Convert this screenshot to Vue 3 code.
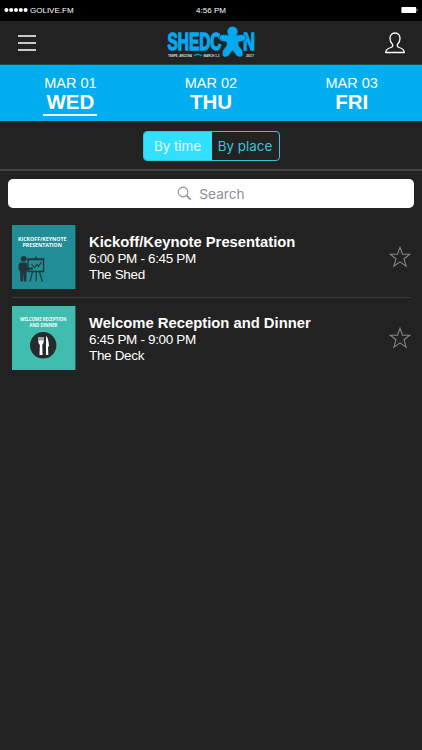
<script setup>

import {ref} from 'vue'


const days = ref([
    {date: 'MAR 01', name: 'WED'},
    {date: 'MAR 02', name: 'THU'},
    {date: 'MAR 03', name: 'FRI'},
])

const selectedDay = ref('WED')
const sortBy = ref('time')

const events = ref([
    {
        title: "Kickoff/Keynote Presentation",
        time: "6:00 PM - 6:45 PM",
        place: "The Shed",
        thumb: "keynote"
    },
    {
        title: "Welcome Reception and Dinner",
        time: "6:45 PM - 9:00 PM",
        place: "The Deck",
        thumb: "dinner"
    }
])

</script>

<template>

<div class="schedule">

    <div class="status-bar">
        <div class="carrier">
            <svg width="24" height="6" viewBox="0 0 24 6">
                <circle v-for="n in 5" :key="n" :cx="n * 4.8 - 2.4" cy="3" r="2.05" fill="#fff" />
            </svg>
            <span>GOLIVE.FM</span>
        </div>
        <span class="clock">4:56 PM</span>
        <svg class="battery" width="18" height="8" viewBox="0 0 18 8">
            <rect x="0.4" y="0.9" width="14.8" height="6.2" rx="0.8" fill="#fff" />
            <path d="M15.8 2.6 Q17.4 4 15.8 5.4 Z" fill="#fff" />
        </svg>
    </div>

    <div class="header">
        <svg class="menu-icon" width="18" height="18" viewBox="0 0 18 18">
            <path d="M0 2H18M0 9H18M0 16H18" stroke="#fff" stroke-width="1.7" />
        </svg>
        <svg class="logo" width="90" height="34" viewBox="0 0 90 34">
            <g class="logo-text" fill="#04a9f0" stroke="#04a9f0" stroke-width="1.4">
                <text x="0.5" y="23.8" textLength="54" lengthAdjust="spacingAndGlyphs">SHEDC</text>
                <text x="76" y="23.8" textLength="12" lengthAdjust="spacingAndGlyphs">N</text>
            </g>
            <g fill="#04a9f0" stroke="#232323" stroke-width="0.6">
                <path d="M61.5 9 H69.5 L74.8 8.6 Q79.3 8.8 79.2 12.2 Q78.8 15.4 74.5 15.5 L71.6 16.2 L72 20 Q77 24.5 76 29 Q74 32.5 70.5 30.5 Q68.5 29.6 67.5 27 L65.6 24.7 L63.7 27 Q62.7 29.6 60.7 30.5 Q57 32.5 55.2 29 Q54.3 24.5 59.2 20 L59.6 16.2 L56.7 15.5 Q52.4 15.4 52 12.2 Q52 8.8 56.3 8.6 Z" />
            </g>
            <circle cx="65.5" cy="5.7" r="5.2" fill="#04a9f0" />
            <g class="logo-small" fill="#ddd">
                <text x="1" y="30.5" textLength="24" lengthAdjust="spacingAndGlyphs">TEMPE, ARIZONA</text>
                <text x="36.5" y="30.5" textLength="16" lengthAdjust="spacingAndGlyphs">MARCH 1-3</text>
                <text x="79" y="30.5" textLength="8" lengthAdjust="spacingAndGlyphs">2017</text>
            </g>
            <path d="M27 29.8 Q30.8 26.9 34.7 29.8" fill="none" stroke="#04a9f0" stroke-width="1.2" />
        </svg>
        <svg class="user-icon" width="20" height="22" viewBox="0 0 20 22">
            <path d="M10 1 C6.7 1 4.9 3.3 5 6.6 C5 9 5.9 11 7.4 12.3 C8.2 13.8 7.6 14.9 5.8 15.5 C2.4 16.5 0.8 17.3 0.7 20.5 H19.3 C19.2 17.3 17.6 16.5 14.2 15.5 C12.4 14.9 11.8 13.8 12.6 12.3 C14.1 11 15 9 15 6.6 C15.1 3.3 13.3 1 10 1 Z" fill="none" stroke="#fff" stroke-width="1.3" stroke-linejoin="round" />
        </svg>
    </div>

    <div class="day-tabs">
        <div v-for="day in days" :key="day.name" class="day-tab" @click="selectedDay = day.name">
            <div class="day-label" :class="{ active: selectedDay === day.name }">
                <span class="day-date">{{ day.date }}</span>
                <span class="day-name">{{ day.name }}</span>
            </div>
        </div>
    </div>

    <div class="sort-bar">
        <div class="segmented">
            <button :class="{ active: sortBy === 'time' }" @click="sortBy = 'time'">By time</button>
            <button :class="{ active: sortBy === 'place' }" @click="sortBy = 'place'">By place</button>
        </div>
    </div>

    <div class="search-bar">
        <div class="search-box">
            <svg width="15" height="15" viewBox="0 0 15 15">
                <circle cx="6" cy="6" r="4.9" fill="none" stroke="#8e8e93" stroke-width="1.1" />
                <path d="M9.6 9.6L13.8 13.8" stroke="#8e8e93" stroke-width="1.5" />
            </svg>
            <span>Search</span>
        </div>
    </div>

    <div class="event-list">
        <div v-for="event in events" :key="event.title" class="event">
            <svg v-if="event.thumb === 'keynote'" class="thumb" width="64" height="64" viewBox="0 0 64 64">
                <rect width="63.4" height="64" fill="#218e96" />
                <g class="thumb-text">
                    <text x="6" y="15.6" textLength="48.5" lengthAdjust="spacingAndGlyphs">KICKOFF/KEYNOTE</text>
                    <text x="10.5" y="22" textLength="39.5" lengthAdjust="spacingAndGlyphs">PRESENTATION</text>
                </g>
                <g fill="none" stroke="#25343a">
                    <path d="M16 34.5H31.5V46.5H16ZM14.8 34H32.5M24 31.5V34" stroke-width="1.4" />
                    <path d="M20.5 47L18 56.5M24.2 47V56.5M27.5 47L30.5 56.5" stroke-width="1.2" />
                    <path d="M19.5 39L22.5 42.5L25 39.5L26.5 41.5L29.5 36.8" stroke-width="1.1" />
                    <path d="M12 41L16 43.7L21 43.5" stroke-width="2" />
                </g>
                <circle cx="11.7" cy="33.8" r="2.9" fill="#25343a" />
                <path d="M8.5 37.5H13.5Q15.3 38 15.3 40V46H14.7L14.4 56.5H11.9L11.6 48L11 56.5H8.5L8.1 46.5L6.5 44V40Q6.5 38 8.5 37.5Z" fill="#25343a" />
            </svg>
            <svg v-else class="thumb" width="64" height="64" viewBox="0 0 64 64">
                <rect width="63.4" height="64" fill="#3fbdae" />
                <g class="thumb-text">
                    <text x="8" y="14.6" textLength="46.5" lengthAdjust="spacingAndGlyphs">WELCOME RECEPTION</text>
                    <text x="17.5" y="21" textLength="28" lengthAdjust="spacingAndGlyphs">AND DINNER</text>
                </g>
                <circle cx="31.2" cy="39.3" r="13.2" fill="#252c2d" />
                <path d="M27 31V36M29 31V36M31 31V36" stroke="#fff" stroke-width="1.1" />
                <path d="M26.5 34.5H31.5V36.5Q31.3 38.4 30.2 38.8L30.6 49H27.5L27.9 38.8Q26.7 38.4 26.5 36.5Z" fill="#fff" />
                <path d="M34 30Q36.5 31.5 37 40L36 41L36.3 49H34Z" fill="#fff" />
            </svg>
            <div class="event-body">
                <div class="event-info">
                    <span class="event-title">{{ event.title }}</span>
                    <span>{{ event.time }}</span>
                    <span>{{ event.place }}</span>
                </div>
                <svg class="star" width="22" height="22" viewBox="0 0 22 22">
                    <path d="M11 1.2L13.5 8.2H20.8L15 12.8L17.1 20.1L11 15.9L4.9 20.1L7 12.8L1.2 8.2H8.5Z" fill="none" stroke="#858585" stroke-width="1.1" />
                </svg>
            </div>
        </div>
    </div>

</div>

</template>

<style>
body {
    background-color: #222222;
}
</style>

<style scoped>

.schedule {
    width: 422px;
    min-height: 750px;
    background-color: #222222;
    color: white;
    font-family: "Liberation Sans", Arial, sans-serif;
}

.status-bar {
    display: grid;
    grid-template-columns: 1fr auto 1fr;
    align-items: center;
    height: 21px;
    box-sizing: border-box;
    padding: 0 4px 1px;
    background-color: black;
    font-size: 8px;
}

.carrier {
    display: flex;
    align-items: center;
    gap: 2px;
}

.battery {
    justify-self: end;
    margin-right: -1px;
}

.header {
    display: flex;
    justify-content: space-between;
    align-items: center;
    height: 44px;
    box-sizing: border-box;
    padding: 0 17px 0 18px;
    border-bottom: 1px solid #16505f;
}

.logo {
    margin-left: 2px;
    overflow: visible;
}

.logo-text {
    font-size: 23px;
    font-weight: bold;
}

.logo-small {
    font-size: 3.6px;
    font-weight: bold;
}

.day-tabs {
    display: grid;
    grid-template-columns: repeat(3, 1fr);
    height: 56px;
    background-color: #02adf0;
}

.day-tab {
    display: flex;
    justify-content: center;
    align-items: flex-start;
}

.day-label {
    display: flex;
    flex-direction: column;
    align-items: center;
    width: 54px;
    height: 39px;
    padding-top: 10px;
    border-bottom: 2px solid transparent;
}

.day-label.active {
    border-bottom-color: #e9ffff;
}

.day-date {
    font-size: 14.5px;
    line-height: 17px;
    white-space: nowrap;
}

.day-name {
    font-size: 20.5px;
    font-weight: bold;
    line-height: 20px;
}

.sort-bar {
    display: flex;
    justify-content: center;
    height: 50px;
    box-sizing: border-box;
    padding-top: 10px;
    border-bottom: 2px solid #434343;
}

.segmented {
    display: grid;
    grid-template-columns: 68px 1fr;
    width: 137px;
    height: 30px;
    box-sizing: border-box;
    border: 1px solid #35c5df;
    border-radius: 4px;
    overflow: hidden;
}

.segmented button {
    padding: 0;
    border: none;
    background: none;
    color: #39c4dc;
    font-family: Inter, sans-serif;
    font-size: 13.4px;
}

.segmented button.active {
    background-color: #33dfff;
    color: #e8ffff;
}

.search-bar {
    padding: 8px 8px 0;
}

.search-box {
    display: flex;
    justify-content: center;
    align-items: center;
    gap: 7px;
    height: 29px;
    border-radius: 5px;
    background-color: white;
    color: #8e8e93;
    font-family: Inter, sans-serif;
    font-size: 13.7px;
}

.event-list {
    padding: 9px 11px 0 11.5px;
}

.event {
    display: flex;
    align-items: center;
    gap: 13.5px;
    height: 80px;
    border-bottom: 1px solid #3a3a3a;
}

.event:last-child {
    border-bottom: none;
}

.thumb {
    flex: none;
}

.thumb-text {
    fill: #f1ffff;
    font-family: "Open Sans", sans-serif;
    font-size: 5.8px;
    font-weight: bold;
}

.event-body {
    display: flex;
    flex: 1;
    justify-content: space-between;
    align-items: center;
}

.event-info {
    display: flex;
    flex-direction: column;
    padding-top: 2px;
    font-size: 13.5px;
    letter-spacing: -0.33px;
    line-height: 15.4px;
}

.event-title {
    font-size: 14.8px;
    font-weight: bold;
    letter-spacing: 0;
    line-height: 17px;
}

</style>
